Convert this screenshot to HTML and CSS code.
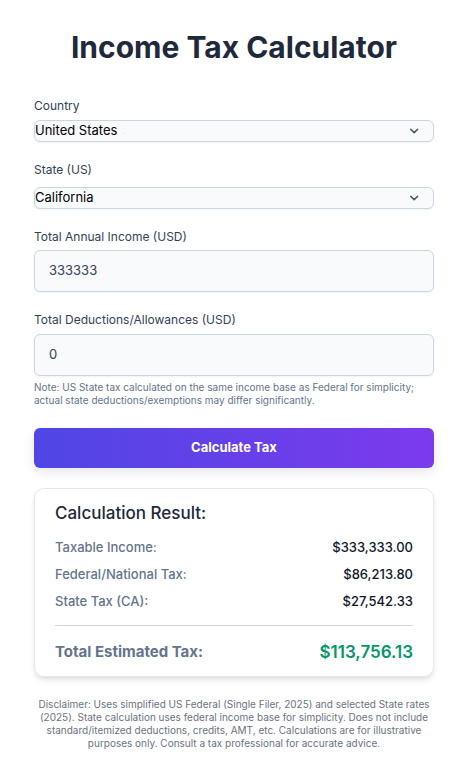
FILE: index.html
```html
<!DOCTYPE html>
<html lang="en">
<head>
<meta charset="utf-8">
<meta name="viewport" content="width=device-width, initial-scale=1">
<title>Income Tax Calculator</title>
<link rel="stylesheet" href="styles.css">
</head>
<body>
<main class="calculator">
  <h1 class="title">Income Tax Calculator</h1>
  <form class="form">
    <div class="field">
      <label class="label" for="country">Country</label>
      <div class="select-wrap">
        <select class="control select" id="country"><option>United States</option></select>
        <svg class="chevron" viewBox="0 0 14 14" aria-hidden="true"><path d="M3.7 5.2L7.2 8.6l3.5-3.4"/></svg>
      </div>
    </div>
    <div class="field field-state">
      <label class="label" for="state">State (US)</label>
      <div class="select-wrap">
        <select class="control select" id="state"><option>California</option></select>
        <svg class="chevron" viewBox="0 0 14 14" aria-hidden="true"><path d="M3.7 5.2L7.2 8.6l3.5-3.4"/></svg>
      </div>
    </div>
    <div class="field">
      <label class="label label-tight" for="income">Total Annual Income (USD)</label>
      <input class="control input" id="income" type="text" inputmode="decimal" value="333333">
    </div>
    <div class="field">
      <label class="label" for="deductions">Total Deductions/Allowances (USD)</label>
      <input class="control input" id="deductions" type="text" inputmode="decimal" value="0">
      <p class="note">Note: US State tax calculated on the same income base as Federal for simplicity; actual state deductions/exemptions may differ significantly.</p>
    </div>
    <button class="submit" type="button">Calculate Tax</button>
  </form>
  <section class="result">
    <h2 class="result-title">Calculation Result:</h2>
    <dl class="rows">
      <div class="row"><dt>Taxable Income:</dt><dd>$333,333.00</dd></div>
      <div class="row"><dt>Federal/National Tax:</dt><dd>$86,213.80</dd></div>
      <div class="row"><dt>State Tax (CA):</dt><dd>$27,542.33</dd></div>
      <div class="row total"><dt>Total Estimated Tax:</dt><dd>$113,756.13</dd></div>
    </dl>
  </section>
  <p class="disclaimer">Disclaimer: Uses simplified US Federal (Single Filer, 2025) and selected State rates (2025). State calculation uses federal income base for simplicity. Does not include standard/itemized deductions, credits, AMT, etc. Calculations are for illustrative purposes only. Consult a tax professional for accurate advice.</p>
</main>
</body>
</html>
```
FILE: styles.css
```css
* { box-sizing: border-box; }

body {
  margin: 0;
  background: #fff;
  color: #1e293b;
  font-family: Inter, "Liberation Sans", sans-serif;
  font-size: 13px;
}

h1, h2, p, dl, dd { margin: 0; }

.calculator { padding: 28px 28px 20px 34px; }

.title {
  font-size: 30px;
  line-height: 38px;
  font-weight: 700;
  text-align: center;
  margin-bottom: 32px;
}

.form {
  display: flex;
  flex-direction: column;
  gap: 20px;
}

.field { display: flex; flex-direction: column; }

.label {
  font-size: 12px;
  line-height: 16px;
  font-weight: 400;
  color: #334155;
  margin-bottom: 6px;
}

.label-tight { margin-bottom: 5px; }

.field-state .label { margin-bottom: 9px; }

.control {
  display: block;
  width: 100%;
  border: 1px solid #cbd5e1;
  border-radius: 6px;
  background: #f8fafc;
  box-shadow: 0 1px 2px rgba(0, 0, 0, 0.05);
  font-family: inherit;
  font-size: 13px;
}

.select-wrap { position: relative; }

.select {
  appearance: none;
  height: 22px;
  padding: 0 0 2px;
  color: #000;
}

.chevron {
  position: absolute;
  right: 13px;
  top: 4px;
  width: 14px;
  height: 14px;
  fill: none;
  stroke: #475569;
  stroke-width: 1.5;
  stroke-linecap: round;
  stroke-linejoin: round;
  pointer-events: none;
}

.input {
  height: 42px;
  padding: 0 14px 2px;
  color: #334155;
}

.note {
  margin-top: 5px;
  padding-bottom: 1px;
  font-size: 10px;
  line-height: 13px;
  color: #64748b;
}

.submit {
  height: 40px;
  padding: 0 0 2px;
  border: 0;
  border-radius: 6px;
  background: linear-gradient(to right, #4f46e5, #7c3aed);
  box-shadow: 0 4px 12px rgba(0, 0, 0, 0.1);
  color: #fff;
  font-family: inherit;
  font-size: 13px;
  font-weight: 700;
}

.result {
  margin-top: 20px;
  padding: 14px 20px 12px;
  border: 1px solid #e5e7eb;
  border-radius: 10px;
  box-shadow: 0 4px 6px -1px rgba(0, 0, 0, 0.1), 0 2px 4px -2px rgba(0, 0, 0, 0.1);
}

.result-title {
  font-size: 17px;
  line-height: 20px;
  font-weight: 500;
  margin-bottom: 14px;
}

.rows {
  display: flex;
  flex-direction: column;
  gap: 7px;
}

.row {
  display: flex;
  justify-content: space-between;
  align-items: center;
  line-height: 20px;
  font-weight: 500;
}

.row dt { color: #64748b; }
.row dd { color: #0f172a; }

.total {
  margin-top: 7px;
  padding-top: 14px;
  border-top: 1px solid #d1d5db;
  font-size: 15px;
  line-height: 24px;
  font-weight: 700;
}

.total dd {
  font-size: 17px;
  font-weight: 600;
  color: #059669;
}

.disclaimer {
  margin-top: 21px;
  font-size: 10px;
  line-height: 13px;
  color: #6b7280;
  text-align: center;
}
```
